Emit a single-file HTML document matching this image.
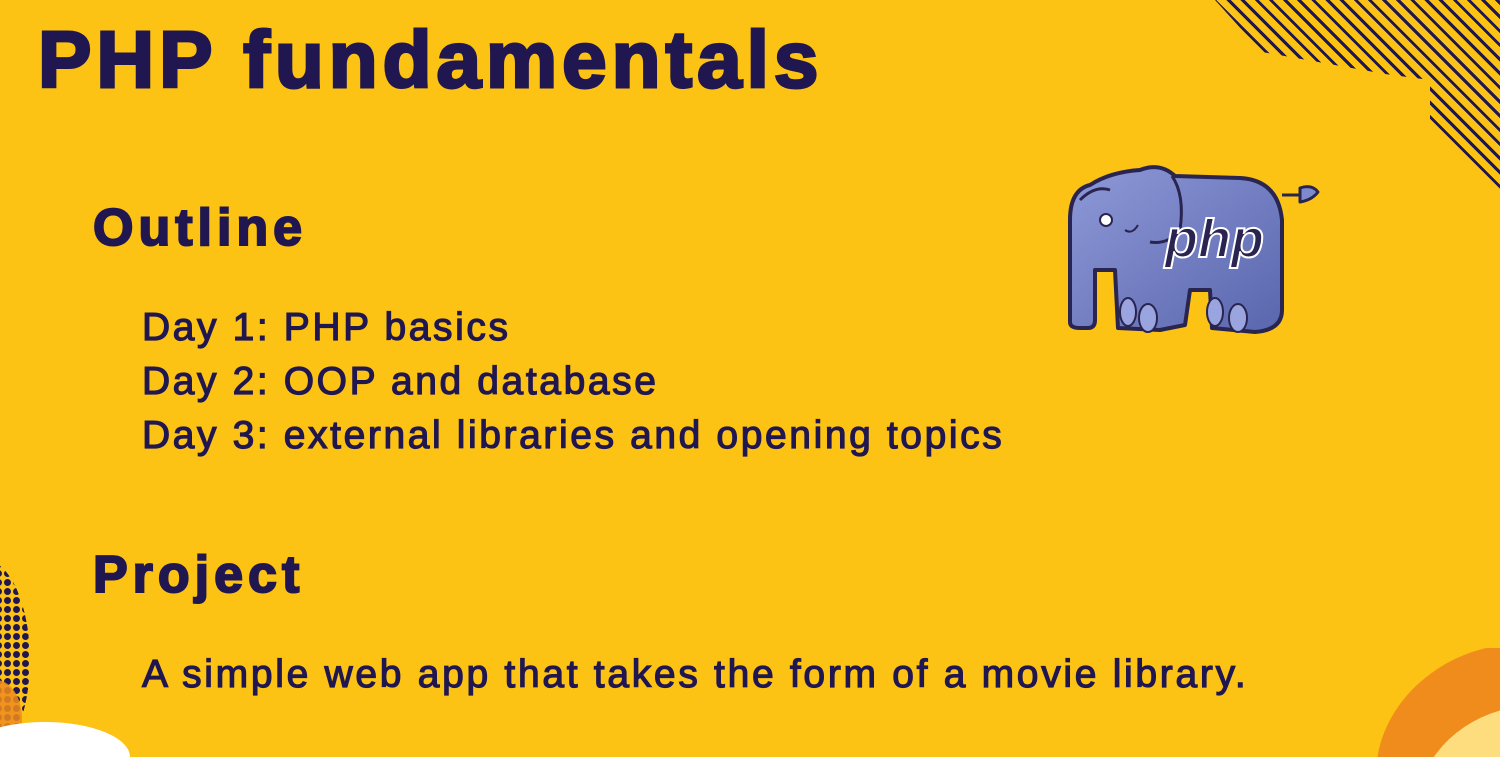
<!DOCTYPE html>
<html><head><meta charset="utf-8"><style>
html,body{margin:0;padding:0;width:1500px;height:757px;overflow:hidden}
#w{position:absolute;left:0;top:0;width:1500px;height:757px;background:#FCC314;overflow:hidden;clip-path:inset(0);font-family:"Liberation Sans",sans-serif;color:#201650}
.t{position:absolute;white-space:nowrap;margin:0}
h1.t{left:38px;top:14px;font-size:80px;font-weight:900;letter-spacing:5px;-webkit-text-stroke:3px #201650}
h2.t{font-size:52px;font-weight:900;-webkit-text-stroke:2px #201650;letter-spacing:5px}
.l{position:absolute;left:142px;font-size:39px;-webkit-text-stroke:1.2px #201650;white-space:nowrap;letter-spacing:2.6px}
</style></head><body><div id="w">
<div style="position:absolute;left:1200px;top:0;width:300px;height:200px;clip-path:polygon(15px 0,300px 0,300px 195px,230px 125px,230px 80px,185px 74px,62px 52px);background:repeating-linear-gradient(45deg,#201650 0 3px,transparent 3px 10px)"></div>
<h1 class="t">PHP fundamentals</h1>
<h2 class="t" style="left:93px;top:198px">Outline</h2>
<div class="l" style="top:306px">Day 1: PHP basics</div>
<div class="l" style="top:360px">Day 2: OOP and database</div>
<div class="l" style="top:414px">Day 3: external libraries and opening topics</div>
<h2 class="t" style="left:93px;top:545px">Project</h2>
<div class="l" style="top:653px;letter-spacing:2.7px">A simple web app that takes the form of a movie library.</div>

<svg style="position:absolute;left:1050px;top:150px" width="280" height="200" viewBox="0 0 280 200">
<defs><linearGradient id="g" x1="0" y1="0" x2="1" y2="1"><stop offset="0" stop-color="#8e99d8"/><stop offset="1" stop-color="#5a66ad"/></linearGradient></defs>
<g stroke="#2a2450" stroke-width="4" stroke-linejoin="round">
<path d="M40 35 Q20 40 20 70 L20 172 Q20 178 30 178 L38 178 Q45 178 45 170 L45 120 L65 120 L68 178 L110 180 L135 175 L140 140 L160 140 L162 178 L205 182 Q232 180 232 160 L232 70 Q228 30 190 28 L125 26 Q110 12 90 20 Q60 22 40 35Z" fill="url(#g)"/>
<path d="M232 45 L255 45" fill="none" stroke-width="3"/>
<path d="M250 38 Q262 34 268 42 Q262 50 250 52Z" fill="#7E8ACB" stroke-width="3"/>
<path d="M122 26 Q135 45 130 80 Q118 95 100 92" fill="none" stroke-width="3"/>
<path d="M30 50 Q45 35 60 40" fill="none" stroke-width="3"/>
<circle cx="56" cy="70" r="6" fill="#fff" stroke-width="2"/>
<path d="M75 80 Q82 85 88 75" fill="none" stroke-width="2"/>
</g>
<text x="115" y="107" font-family="Liberation Sans" font-style="italic" font-weight="bold" font-size="54" fill="#2a2450" stroke="#fff" stroke-width="2">php</text>
<g fill="#9aa5e0" stroke="#2a2450" stroke-width="2">
<ellipse cx="78" cy="162" rx="8" ry="14"/><ellipse cx="98" cy="168" rx="9" ry="14"/>
<ellipse cx="165" cy="162" rx="8" ry="14"/><ellipse cx="188" cy="168" rx="9" ry="14"/>
</g>
</svg>

<div style="position:absolute;left:-60px;top:560px;width:90px;height:200px;border-radius:50%;background:radial-gradient(circle,#201650 3.2px,transparent 3.7px) 0 0/9px 9px;clip-path:ellipse(45px 100px at 45px 100px)"></div>
<div style="position:absolute;left:-30px;top:680px;width:52px;height:77px;border-radius:50% 50% 0 0;background:#F08C1C;opacity:.85"></div>
<div style="position:absolute;left:-40px;top:722px;width:170px;height:35px;border-radius:85px 85px 0 0/35px 35px 0 0;background:#fff"></div>
<div style="position:absolute;left:1373px;top:648px;width:127px;height:109px;overflow:hidden">
<div style="position:absolute;left:0;top:0;width:260px;height:220px;border-radius:50%;background:#F08C1C;transform:rotate(-25deg)"></div>
<div style="position:absolute;left:42px;top:62px;width:200px;height:160px;border-radius:50%;background:#FEDD7F;transform:rotate(-25deg)"></div>
</div>
</div></body></html>
